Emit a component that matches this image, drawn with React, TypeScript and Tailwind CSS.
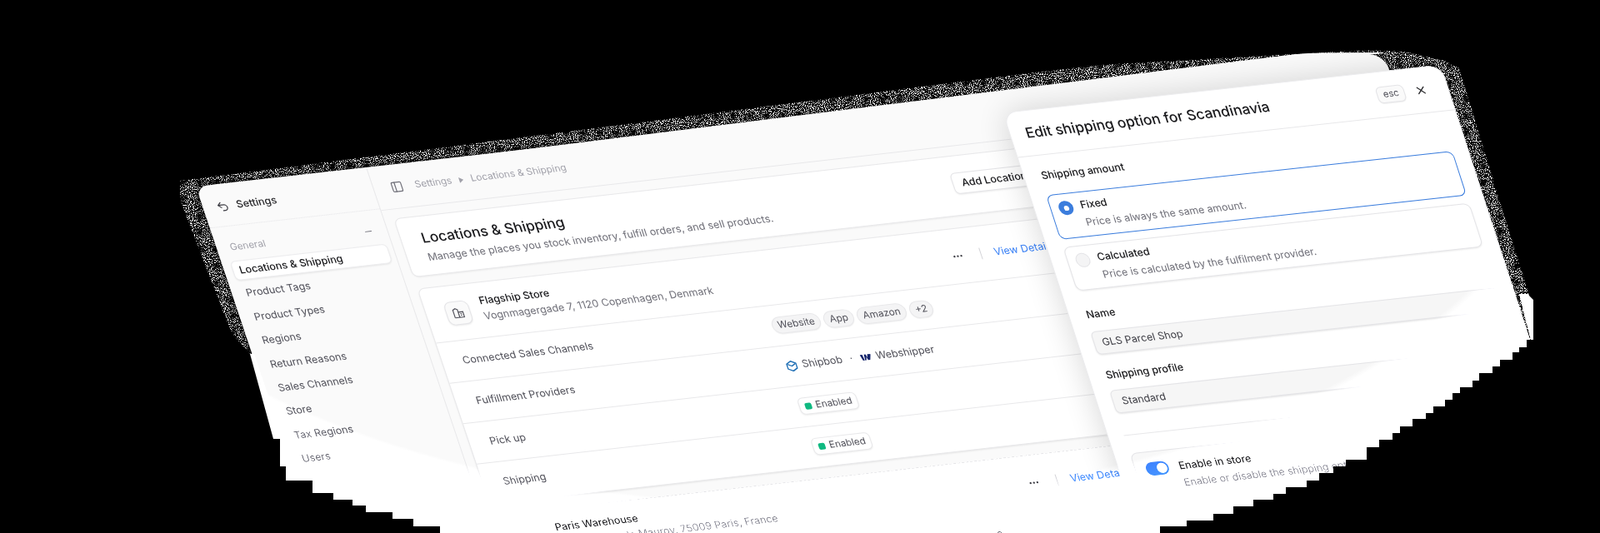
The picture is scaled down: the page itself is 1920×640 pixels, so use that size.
// App.tsx — tilted "Settings / Locations & Shipping" hero with the shipping option modal on top.
import { MoreHorizontal, Minus, PanelLeft, Undo2, X } from 'lucide-react';

const NAV = ['Product Tags', 'Product Types', 'Regions', 'Return Reasons', 'Sales Channels', 'Store', 'Tax Regions', 'Users'];

function Chip({ label }: { label: string }) {
  return (
    <span className="flex h-[21px] items-center rounded-full border border-[#e8e8ea] bg-[#f4f4f5] px-[6px] text-[11.6px] text-[#52525b] shadow-[0_1px_1px_rgba(0,0,0,0.05)]">
      {label}
    </span>
  );
}

function Enabled() {
  return (
    <span className="flex h-[21px] items-center gap-[5px] rounded-md border border-[#e8e8ea] bg-white px-[6px] text-[11.4px] text-[#52525b] shadow-[0_1px_2px_rgba(0,0,0,0.08)]">
      <span className="h-2 w-2 rounded-[2px] bg-[#10b981]" />
      Enabled
    </span>
  );
}

function Row({ label, children }: { label: string; children?: React.ReactNode }) {
  return (
    <div className="flex h-[50px] items-center border-t border-[#e8e8ea] pl-6">
      <span className="w-[371px] shrink-0 text-[12.3px] text-[#52525b]">{label}</span>
      {children}
    </div>
  );
}

function Channels() {
  return (
    <div className="flex items-center gap-1">
      <Chip label="Website" />
      <Chip label="App" />
      <Chip label="Amazon" />
      <Chip label="+2" />
    </div>
  );
}

function LocationHead({ name, address }: { name: string; address: string }) {
  return (
    <div className="flex h-[66px] items-center pl-[23px] pr-[17px]">
      <span className="flex h-[29px] w-[29px] items-center justify-center rounded-lg border border-[#e4e4e7] bg-[#fafafa] shadow-[0_1px_2px_rgba(0,0,0,0.08)]">
        <svg width="15" height="15" viewBox="0 0 15 15" fill="none" stroke="#52525b" strokeWidth="1.2">
          <path d="M2 13V3.500L5 2l2.500 1.500V13M7.500 6.500H13V13H2" />
          <path d="M9.500 8.500h1.700M9.500 10.500h1.700" />
        </svg>
      </span>
      <div className="mb-[3px] ml-[14px] flex flex-col">
        <span className="text-[12.3px] font-medium leading-[19px] text-[#18181b]">{name}</span>
        <span className="text-[12.3px] leading-[20px] text-[#71717a]">{address}</span>
      </div>
      <MoreHorizontal className="ml-auto h-[14px] w-[14px] text-[#3f3f46]" />
      <span className="ml-[20px] mr-[16px] h-[14px] w-px bg-[#d4d4d8]" />
      <span className="text-[12.3px] text-[#3b82f6]">View Details</span>
    </div>
  );
}

function RadioBox({ active, title, text, h }: { active?: boolean; title: string; text: string; h: string }) {
  return (
    <div className={`flex gap-[9px] rounded-lg bg-white pl-[9px] pt-[6px] ${h} ${active ? 'border-[1.5px] border-[#3b7ddd]' : 'border border-[#e4e4e7] shadow-[0_1px_2px_rgba(0,0,0,0.08)]'}`}>
      <span className={`mt-[2px] flex h-[17px] w-[17px] shrink-0 items-center justify-center rounded-full ${active ? 'bg-[#3b7ddd]' : 'border border-[#e4e4e7] bg-[#f4f4f5]'}`}>
        {active && <span className="h-[6px] w-[6px] rounded-full bg-white" />}
      </span>
      <div className="flex flex-col">
        <span className="text-[12.2px] font-medium leading-[18px] text-[#18181b]">{title}</span>
        <span className="mt-[2px] text-[12.1px] leading-[20px] text-[#71717a]">{text}</span>
      </div>
    </div>
  );
}

function Modal() {
  return (
    <div className="absolute left-0 top-0 h-[640px] w-[522px] origin-top-left rounded-[16px] border border-[#ececee] bg-white shadow-[0_0_36px_rgba(0,0,0,0.16)] [transform:matrix(1.008,-0.11,0.322,0.994,1203,135)]">
      <div className="flex h-[54px] items-center border-b border-[#e8e8ea] pl-[18px] pr-[24px]">
        <span className="text-[16.9px] font-medium text-[#18181b]">Edit shipping option for Scandinavia</span>
        <span className="ml-auto flex h-[20px] items-center rounded-md border border-[#e4e4e7] bg-[#fafafa] px-1.5 text-[11px] text-[#52525b] shadow-[0_1px_1px_rgba(0,0,0,0.06)]">esc</span>
        <X className="ml-[12px] h-[15px] w-[15px] text-[#27272a]" />
      </div>
      <div className="flex flex-col px-[18px] pt-[14px]">
        <span className="mb-[13px] pl-[2px] text-[12.2px] font-medium leading-5 text-[#18181b]">Shipping amount</span>
        <RadioBox active title="Fixed" text="Price is always the same amount." h="h-[54px]" />
        <div className="h-[9px]" />
        <RadioBox title="Calculated" text="Price is calculated by the fulfilment provider." h="h-[53px]" />
        <span className="mb-[10px] mt-[19px] pl-[2px] text-[12.2px] font-medium leading-5 text-[#18181b]">Name</span>
        <div className="flex h-[28px] items-center rounded-md border border-[#e4e4e7] bg-[#f6f6f6] px-[9px] text-[12.1px] text-[#3f3f46] shadow-[0_1px_2px_rgba(0,0,0,0.1)]">GLS Parcel Shop</div>
        <span className="mb-[8px] mt-[15px] pl-[2px] text-[12.2px] font-medium leading-5 text-[#18181b]">Shipping profile</span>
        <div className="flex h-[28px] items-center rounded-md border border-[#e4e4e7] bg-[#f6f6f6] px-[10px] text-[12.1px] text-[#3f3f46] shadow-[0_1px_2px_rgba(0,0,0,0.1)]">Standard</div>
        <div className="mt-[26px] h-px bg-[#e8e8ea]" />
        <div className="mt-[21px] flex h-[60px] gap-[12px] rounded-lg border border-[#e4e4e7] bg-[#f8f8f8] pl-[12px] pt-[10px]">
          <span className="mt-[2px] flex h-[16px] w-[27px] shrink-0 items-center justify-end rounded-full bg-[#3b7df0] pr-[2px]">
            <span className="h-[12px] w-[12px] rounded-full bg-white" />
          </span>
          <div className="flex flex-col">
            <span className="text-[12.2px] font-medium leading-[20px] text-[#18181b]">Enable in store</span>
            <span className="text-[12.1px] leading-[20px] text-[#71717a]">Enable or disable the shipping option</span>
          </div>
        </div>
      </div>
    </div>
  );
}

function Sidebar() {
  return (
    <aside className="flex w-[205px] shrink-0 flex-col border-r border-[#e8e8ea]">
      <div className="flex h-[52px] items-center gap-[9px] border-b border-dotted border-[#e4e4e7] pl-[16px] pt-[4px]">
        <Undo2 className="h-[15px] w-[15px] text-[#3f3f46]" />
        <span className="text-[12.3px] font-medium text-[#27272a]">Settings</span>
      </div>
      <div className="flex items-center pl-[16px] pr-[16px] pt-[16px]">
        <span className="text-[11.5px] leading-[18px] text-[#a1a1aa]">General</span>
        <Minus className="ml-auto h-3 w-3 text-[#71717a]" />
      </div>
      <div className="ml-[10px] mr-[6px] mt-[8px] flex h-[24px] items-center rounded-md border border-[#ececee] bg-white pl-[7px] text-[12.3px] font-medium text-[#18181b] shadow-[0_1px_2px_rgba(0,0,0,0.08)]">
        Locations &amp; Shipping
      </div>
      <nav className="mt-[2px] flex flex-col pl-[17px]">
        {NAV.map((item) => (
          <span key={item} className="flex h-[29.4px] items-center text-[12.3px] text-[#52525b]">{item}</span>
        ))}
      </nav>
    </aside>
  );
}

function Main() {
  return (
    <main className="flex min-w-0 flex-1 flex-col">
      <div className="flex h-[54px] shrink-0 items-center gap-[8px] border-b border-[#e8e8ea] pl-[20px] pt-[2px] text-[11.5px] text-[#a1a1aa]">
        <PanelLeft className="mr-[6px] h-[15px] w-[15px] text-[#71717a]" />
        <span>Settings</span>
        <svg width="7" height="8" viewBox="0 0 7 8" className="text-[#a1a1aa]"><path d="M1 0.500 6 4 1 7.500Z" fill="currentColor" /></svg>
        <span>Locations &amp; Shipping</span>
      </div>
      <div className="flex w-[782px] flex-col pl-[11px] pt-[11px]">
        <section className="flex h-[73px] rounded-lg border border-[#e8e8ea] bg-white pl-[24px] shadow-[0_1px_2px_rgba(0,0,0,0.06)]">
          <div className="flex flex-col pt-[13px]">
            <span className="text-[17px] font-medium leading-[26px] text-[#18181b]">Locations &amp; Shipping</span>
            <span className="mt-[1px] text-[12.3px] leading-[20px] text-[#71717a]">Manage the places you stock inventory, fulfill orders, and sell products.</span>
          </div>
          <span className="ml-auto mt-[20px] flex h-[26px] w-[110px] items-center rounded-md border border-[#e4e4e7] bg-white pl-[10px] text-[12.3px] font-medium text-[#18181b] shadow-[0_1px_2px_rgba(0,0,0,0.08)]">
            Add Location
          </span>
        </section>
        <section className="mt-[14px] rounded-lg border border-[#e8e8ea] bg-white shadow-[0_1px_2px_rgba(0,0,0,0.08)]">
          <LocationHead name="Flagship Store" address="Vognmagergade 7, 1120 Copenhagen, Denmark" />
          <Row label="Connected Sales Channels"><Channels /></Row>
          <Row label="Fulfillment Providers">
            <div className="flex items-center gap-[6px] pl-[1px] text-[12.3px] text-[#52525b]">
              <svg width="13" height="14" viewBox="0 0 13 14" fill="none" stroke="#1f6fb5" strokeWidth="1.4">
                <path d="M6.500 1 12 4v6l-5.500 3L1 10V4Z" />
                <path d="M2 4.500 6.500 7 11 4.500" />
              </svg>
              Shipbob
              <span className="mx-[3px]">·</span>
              <svg width="13" height="9" viewBox="0 0 13 9" fill="#14246b">
                <path d="M0 1h3l1 7H2ZM5 1h2l1 4 1-4h4l-2.500 7H8L7 4 6 8H4.500Z" />
              </svg>
              Webshipper
            </div>
          </Row>
          <Row label="Pick up"><Enabled /></Row>
          <Row label="Shipping"><Enabled /></Row>
        </section>
        <section className="mt-[13px] rounded-lg border border-dashed border-[#e4e4e7] bg-white">
          <LocationHead name="Paris Warehouse" address="8 Rue Godot de Mauroy, 75009 Paris, France" />
          <Row label="Connected Sales Channels"><Channels /></Row>
        </section>
      </div>
    </main>
  );
}

export default function App() {
  return (
    <div className="h-[640px] w-[1920px] overflow-hidden bg-black [font-family:Inter,'Liberation_Sans',sans-serif]">
      {/* silhouette of the masked picture: stippled top edge, stepped bottom curve */}
      <div className="relative h-[640px] w-[1920px] overflow-hidden [clip-path:polygon(216px_217px,760px_148px,1200px_92px,1320px_78px,1642px_60px,1686px_62px,1734px_73px,1751px_82px,1800px_243px,1835px_355px,1840px_360px,1840px_408px,1832px_408px,1832px_417px,1823px_417px,1823px_423px,1815px_423px,1815px_432px,1800px_432px,1800px_440px,1791px_440px,1791px_448px,1775px_448px,1775px_457px,1767px_457px,1767px_465px,1752px_465px,1752px_472px,1743px_472px,1743px_480px,1734px_480px,1734px_488px,1720px_488px,1720px_496px,1711px_496px,1711px_503px,1695px_503px,1695px_512px,1680px_512px,1680px_520px,1671px_520px,1671px_528px,1655px_528px,1655px_537px,1640px_537px,1640px_552px,1615px_552px,1615px_560px,1600px_560px,1600px_568px,1583px_568px,1583px_577px,1568px_577px,1568px_585px,1543px_585px,1543px_593px,1528px_593px,1528px_600px,1504px_600px,1504px_608px,1480px_608px,1480px_617px,1456px_617px,1456px_625px,1424px_625px,1424px_632px,1392px_632px,1392px_640px,528px_640px,528px_632px,496px_632px,496px_623px,471px_623px,471px_615px,439px_615px,439px_607px,423px_607px,423px_600px,400px_600px,400px_592px,375px_592px,375px_577px,343px_577px,343px_560px,336px_560px,336px_527px,328px_527px,300px_425px,278px_400px,216px_240px)]">
        <svg className="absolute inset-0 h-full w-full" aria-hidden="true">
          <filter id="stipple" x="0" y="0" width="100%" height="100%" colorInterpolationFilters="sRGB">
            <feTurbulence type="fractalNoise" baseFrequency="0.95" numOctaves="1" seed="4" />
            <feColorMatrix type="matrix" values="9 0 0 0 -4.6  9 0 0 0 -4.6  9 0 0 0 -4.6  0 0 0 0 1" />
          </filter>
          <rect width="1920" height="640" filter="url(#stipple)" />
        </svg>

        {/* the tilted window */}
        <div className="absolute left-0 top-0 h-[720px] w-[1425px] origin-top-left [transform:matrix(1,-0.113,0.325,0.968,235,224)]">
          {/* the top edge runs a little steeper than the rows */}
          <div className="absolute -top-[10px] left-[300px] h-[11px] w-[1125px] bg-[#fafafa] [clip-path:polygon(0_100%,92%_0,100%_90%,100%_100%)]" />
          <div className="flex h-full w-full rounded-[14px] rounded-tr-[20px] bg-[#fafafa] shadow-[0_0_7px_#000]">
            <Sidebar />
            <Main />
          </div>
        </div>
        <Modal />

        {/* white fill of the mask left of the window, below the stipple */}
        <div className="absolute inset-0 bg-white [clip-path:polygon(290px_425px,305px_425px,378px_640px,290px_640px)]" />
        {/* white fill of the mask right of the modal */}
        <div className="absolute inset-0 bg-white [clip-path:polygon(1823px_353px,1840px_353px,1850px_420px,1840px_420px)]" />

        {/* the mask bleaches pale greys to white towards the bottom corners, dark text stays */}
        <div className="pointer-events-none absolute inset-0 mix-blend-color-dodge [background:radial-gradient(ellipse_952px_514px_at_950px_100px,#000_98%,#2a2a2a_103%)]" />
      </div>
    </div>
  );
}
